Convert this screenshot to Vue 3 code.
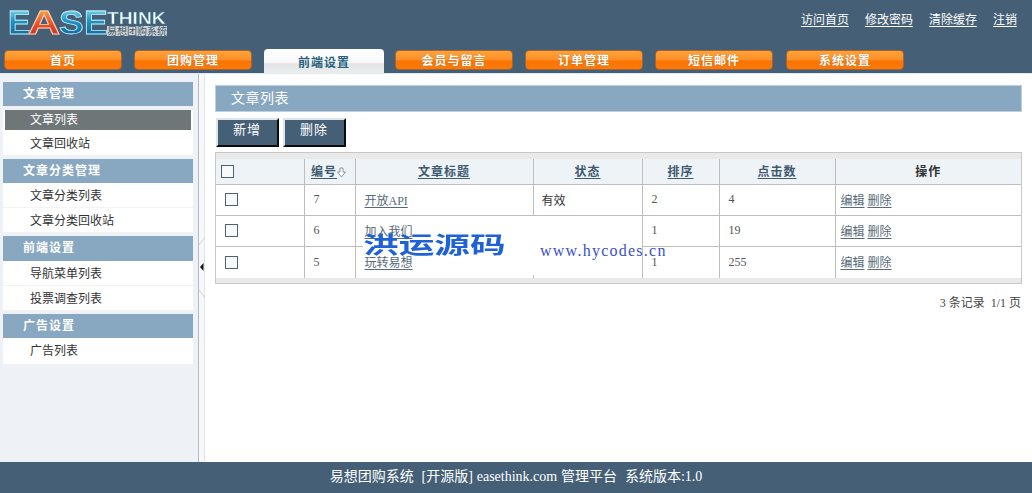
<script setup>
const tabs = [
  { name: '首页', w: 118, gap: 12 },
  { name: '团购管理', w: 118, gap: 12 },
  { name: '前端设置', w: 120, gap: 11, active: true },
  { name: '会员与留言', w: 118, gap: 12 },
  { name: '订单管理', w: 118, gap: 12 },
  { name: '短信邮件', w: 118, gap: 13 },
  { name: '系统设置', w: 118, gap: 0 }
]
const links = ['访问首页', '修改密码', '清除缓存', '注销']
const groups = [
  { title: '文章管理', items: ['文章列表', '文章回收站'] },
  { title: '文章分类管理', items: ['文章分类列表', '文章分类回收站'] },
  { title: '前端设置', items: ['导航菜单列表', '投票调查列表'] },
  { title: '广告设置', items: ['广告列表'] }
]
const rows = [
  { id: 7, title: '开放API', status: '有效', sort: 2, hits: 4 },
  { id: 6, title: '加入我们', status: '', sort: 1, hits: 19 },
  { id: 5, title: '玩转易想', status: '', sort: 1, hits: 255 }
]
</script>

<template>
  <div class="page">
    <header class="top">
      <div class="topline">
        <div class="logo">
          <div class="ease">
            <span class="l e1">E</span>
            <span class="l a">A</span>
            <span class="l s">S</span>
            <span class="l e2">E</span>
          </div>
          <div class="think">
            <b>THINK</b>
            <i>易想团购系统</i>
          </div>
        </div>
        <nav class="links">
          <a v-for="l in links" :key="l">{{ l }}</a>
        </nav>
      </div>
      <nav class="tabs">
        <div
          v-for="t in tabs"
          :key="t.name"
          class="tab"
          :class="{ active: t.active }"
          :style="{ width: t.w + 'px', marginRight: t.gap + 'px' }"
        >{{ t.name }}</div>
      </nav>
    </header>

    <div class="body">
      <aside class="side">
        <section v-for="g in groups" :key="g.title" class="group">
          <h3>{{ g.title }}</h3>
          <ul>
            <li v-for="i in g.items" :key="i" :class="{ on: i === '文章列表' }">{{ i }}</li>
          </ul>
        </section>
      </aside>
      <div class="split">
        <svg class="handle" width="6" height="62" viewBox="0 0 6 62">
          <path d="M0 8 L6 0 M0 53 L6 61" stroke="#cfd4d8" fill="none" />
          <path d="M4.500 26 L1 30 L4.500 34 Z" fill="#111" />
        </svg>
      </div>
      <main class="main">
        <h2>文章列表</h2>
        <div class="btns">
          <button>新增</button>
          <button>删除</button>
        </div>
        <div class="tablewrap">
          <table>
            <colgroup>
              <col class="c1" /><col class="c2" /><col class="c3" />
              <col class="c4" /><col class="c5" /><col class="c6" /><col />
            </colgroup>
            <thead>
              <tr>
                <th class="chk"><span class="box"></span></th>
                <th class="idh">
                  <a>编号</a>
                  <svg width="9" height="11" viewBox="0 0 9 11"><path d="M3 1h3v4h2.500L4.500 10 .5 5H3z" fill="#fff" stroke="#8b949b" /></svg>
                </th>
                <th><a>文章标题</a></th>
                <th><a>状态</a></th>
                <th><a>排序</a></th>
                <th><a>点击数</a></th>
                <th class="plain">操作</th>
              </tr>
            </thead>
            <tbody>
              <tr v-for="r in rows" :key="r.id">
                <td class="chk2"><span class="box"></span></td>
                <td>{{ r.id }}</td>
                <td><a>{{ r.title }}</a></td>
                <td class="status">{{ r.status }}</td>
                <td>{{ r.sort }}</td>
                <td>{{ r.hits }}</td>
                <td class="ops"><a>编辑</a> <a>删除</a></td>
              </tr>
            </tbody>
          </table>
          <div class="patch"></div>
          <span class="mk-cn">洪运源码</span>
          <span class="mk-en">www.hycodes.cn</span>
        </div>
        <div class="pager">3 条记录&nbsp; 1/1 页</div>
      </main>
    </div>

    <footer class="foot">易想团购系统&nbsp; [开源版] easethink.com 管理平台&nbsp; 系统版本:1.0</footer>
  </div>
</template>

<style>
html, body { margin: 0; padding: 0; background: #fff; }
</style>

<style scoped>
.page {
  width: 1032px;
  height: 493px;
  display: flex;
  flex-direction: column;
  overflow: hidden;
  font-family: "Liberation Serif", "Noto Sans CJK SC", serif;
  font-size: 12px;
  color: #444;
}
.top {
  height: 73px;
  flex: none;
  background: #456076;
  display: flex;
  flex-direction: column;
}
.topline {
  height: 49px;
  display: flex;
  justify-content: space-between;
  align-items: flex-start;
}
.logo {
  margin: 10px 0 0 8px;
  display: flex;
  align-items: flex-start;
  height: 26px;
}
.ease {
  display: flex;
  width: 99px;
  height: 25px;
  font-family: "Liberation Sans", sans-serif;
  font-weight: 700;
  font-size: 33px;
  line-height: 25px;
}
.l {
  display: block;
  flex: none;
  transform-origin: left center;
  background: linear-gradient(#6fd0e8 0, #1c93c4 45%, #0f6d9e 100%);
  -webkit-background-clip: text;
  background-clip: text;
  color: transparent;
  -webkit-text-stroke: 0.8px #c9e9f2;
}
.e1 { width: 20px; transform: scaleX(1.02); }
.a {
  width: 31px;
  transform: scaleX(1.35);
  background-image: linear-gradient(#f7a13c 0, #e8532a 55%, #c9302a 100%);
  -webkit-text-stroke: 0.8px #f4d6c0;
}
.s { width: 25px; transform: scaleX(1.12); }
.e2 { width: 22px; transform: scaleX(1.08); }
.think {
  display: flex;
  flex-direction: column;
  width: 60px;
  height: 24px;
  margin-top: 3px;
}
.think b {
  display: block;
  width: 50px;
  font-family: "Liberation Sans", sans-serif;
  font-size: 16px;
  line-height: 12px;
  height: 13px;
  color: #f4fafc;
  -webkit-text-stroke: 0.4px #2f7898;
  transform: scaleX(1.2);
  transform-origin: left center;
  white-space: nowrap;
}
.think i {
  display: block;
  font-style: normal;
  font-family: "Noto Sans CJK SC", sans-serif;
  font-size: 10px;
  line-height: 10px;
  height: 10px;
  background: #c9d4da;
  color: #4a5a66;
  white-space: nowrap;
}
.links {
  display: flex;
  gap: 16px;
  margin: 13px 15px 0 0;
}
.links a {
  color: #fff;
  font-size: 12px;
  line-height: 15px;
  text-decoration: underline;
  text-underline-offset: 2px;
}
.tabs {
  display: flex;
  padding-left: 4px;
  align-items: flex-start;
  height: 24px;
}
.tab {
  height: 20px;
  margin-top: 1px;
  box-sizing: border-box;
  border-radius: 4px;
  border: 1px solid #a8642d;
  background: linear-gradient(#ffa238 0, #fb8f27 50%, #fb7400 55%, #f97a0c 100%);
  color: #fff;
  font-weight: 700;
  font-size: 12px;
  letter-spacing: 1px;
  line-height: 20px;
  text-align: center;
  text-shadow: 0 0 1px #b05a10;
  flex: none;
}
.tab.active {
  height: 24px;
  margin-top: 0;
  border: 0;
  border-radius: 4px 4px 0 0;
  background: linear-gradient(#fff 0, #fafafa 55%, #e2e3e5 62%, #eceded 100%);
  color: #28607f;
  line-height: 28px;
  text-shadow: none;
}
.body {
  flex: 1;
  display: flex;
  min-height: 0;
  border-top: 1px solid #dcebf2;
}
.side {
  width: 198px;
  flex: none;
  background: #eef2f6;
  box-sizing: border-box;
  padding: 8px 5px 0 3px;
}
.group h3 {
  margin: 0;
  height: 24px;
  background: #88a7c1;
  color: #fff;
  font-size: 12px;
  font-weight: 700;
  letter-spacing: 1px;
  line-height: 24px;
  padding-left: 20px;
  font-family: inherit;
}
.group:nth-child(3) h3 { height: 25px; }
.group ul {
  margin: 0 0 3px;
  padding: 0;
  list-style: none;
  background: #fff;
}
.group li {
  box-sizing: border-box;
  height: 25px;
  line-height: 27px;
  padding-left: 27px;
  color: #333;
  border-bottom: 1px solid #f3f3f3;
}
.group ul li.on {
  background: #6f7678;
  color: #fff;
  height: 20px;
  line-height: 20px;
  margin: 4px 2px 1px;
  padding-left: 25px;
  border: 0;
}
.group:last-child li { height: 26px; border: 0; }
.split {
  width: 7px;
  box-sizing: border-box;
  flex: none;
  background: #f6f8f9;
  border-left: 1px solid #b4babf;
  border-right: 1px solid #e3e6e9;
  position: relative;
}
.handle {
  position: absolute;
  left: 0;
  top: 163px;
  overflow: visible;
}
.main {
  flex: 1;
  min-width: 0;
  padding: 11px 10px 0 10px;
}
.main h2 {
  margin: 0;
  height: 27px;
  background: #88a7c1;
  border: 1px solid #bcd0de;
  box-sizing: border-box;
  color: #fff;
  font-size: 14px;
  font-weight: 400;
  letter-spacing: 0.5px;
  line-height: 25px;
  padding-left: 15px;
}
.btns {
  display: flex;
  gap: 4px;
  margin: 6px 0 5px 1px;
}
.btns button {
  width: 63px;
  height: 29px;
  padding: 0 1px 5px 0;
  box-sizing: border-box;
  background: #456076;
  color: #fff;
  border: 2px solid;
  border-color: #dfe5ea #0c0c0c #0c0c0c #dfe5ea;
  font-family: inherit;
  font-size: 13px;
  letter-spacing: 1px;
  line-height: 20px;
}
.tablewrap {
  position: relative;
  width: 807px;
  box-sizing: border-box;
  border: 1px solid #c8c8c8;
  background: #e9e9e9;
  padding: 6px 0 5px;
}
table {
  width: 100%;
  border-collapse: collapse;
  table-layout: fixed;
  background: #fff;
}
.c1 { width: 88px; }
.c2 { width: 51px; }
.c3 { width: 178px; }
.c4 { width: 109px; }
.c5 { width: 77px; }
.c6 { width: 116px; }
th, td {
  border: 1px solid #bdbdbd;
  box-sizing: border-box;
  padding: 0 5px 0 9px;
  font-weight: 400;
  font-size: 12px;
}
td { height: 31px; }
th:first-child, td:first-child { border-left: 0; }
th:last-child, td:last-child { border-right: 0; }
thead tr:first-child th { border-top: 0; }
tbody tr:last-child td { border-bottom: 0; height: 32px; }
th {
  background: #eef3f7;
  text-align: center;
  height: 25px;
  line-height: 18px;
  padding: 1px 0 0;
}
th a {
  color: #3f5a6e;
  font-weight: 700;
  letter-spacing: 1px;
  text-decoration: underline;
  text-underline-offset: 2px;
}
th.plain { font-weight: 700; color: #333; letter-spacing: 1px; }
th.chk { text-align: left; padding-left: 5px; }
th.idh { white-space: nowrap; padding-right: 2px; }
th.idh svg { vertical-align: -2px; }
td { color: #555; }
td.chk2 { padding-left: 9px; }
td.status { color: #333; padding-left: 8px; }
td.ops { padding-left: 5px; }
td a {
  position: relative;
  z-index: 2;
  color: #566a78;
  text-decoration: underline;
  text-underline-offset: 2px;
}
.box {
  display: block;
  width: 11px;
  height: 11px;
  border: 1px solid #4c6272;
  background: #f8f9fa;
}
.patch {
  position: absolute;
  left: 147px;
  top: 63px;
  width: 279px;
  height: 59px;
  background: #fff;
  z-index: 1;
}
.mk-cn, .mk-en {
  position: absolute;
  z-index: 3;
  white-space: nowrap;
}
.mk-cn {
  left: 147px;
  top: 75px;
  font-family: "Noto Sans CJK SC", sans-serif;
  font-weight: 700;
  font-size: 23px;
  line-height: 30px;
  color: #1f62d8;
  transform: scaleX(1.55);
  transform-origin: left center;
}
.mk-en {
  left: 324px;
  top: 88px;
  font-family: "Liberation Serif", serif;
  font-size: 16px;
  line-height: 20px;
  letter-spacing: 1.25px;
  color: #3a50c8;
}
.pager {
  text-align: right;
  margin-top: 11px;
  width: 806px;
  color: #444;
  line-height: 16px;
}
.foot {
  flex: none;
  height: 31px;
  background: #456076;
  color: #fff;
  text-align: center;
  font-size: 14px;
  word-spacing: 0.4px;
  line-height: 30px;
}
</style>
